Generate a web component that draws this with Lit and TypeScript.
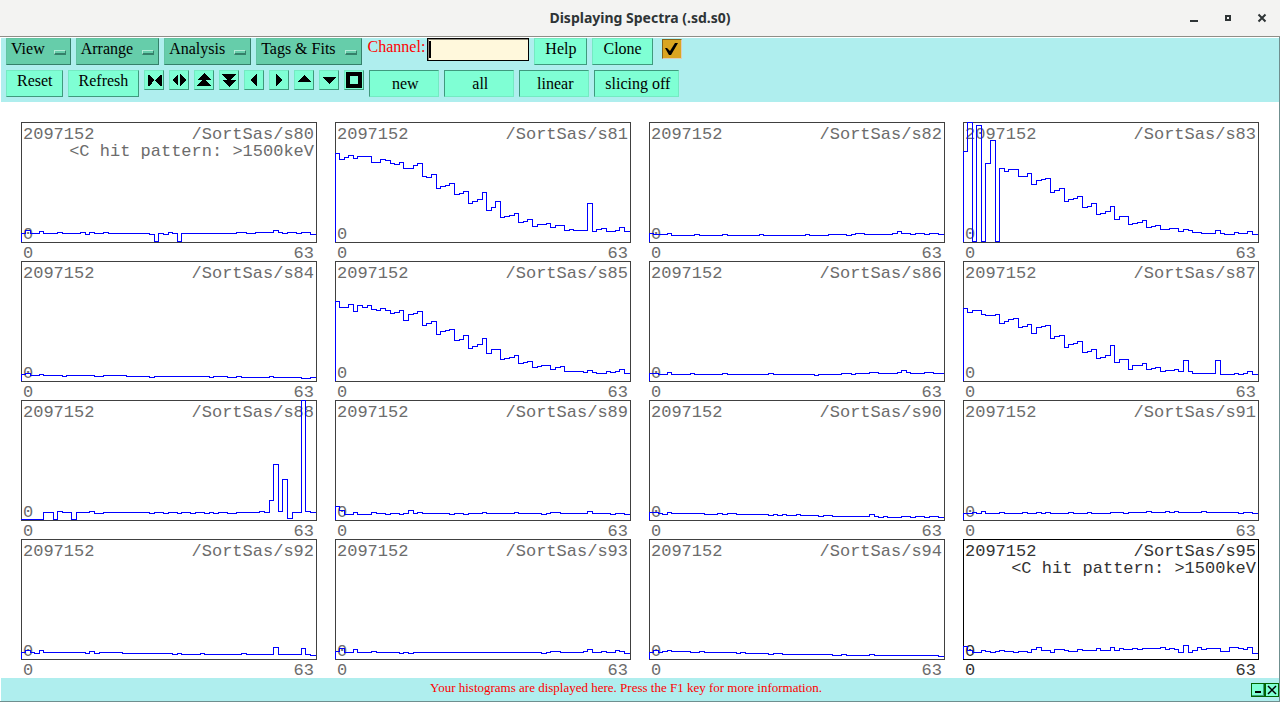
import { LitElement, html, svg, css } from "lit";
import { customElement, property } from "lit/decorators.js";

interface Spectrum {
  name: string;
  note?: string;
  bins: string;
}

// Bin heights, left to right; "h*n" repeats the height h over n bins.
const SPECTRA: Spectrum[] = [
  { name: "s80", note: "<C hit pattern: >1500keV", bins: "9 12 9*2 11 9*3 10 9*4 10 8 10 9*2 10 9*9 8 1 9 8 10 9 1 9*12 10*2 9*2 10*4 12 10 9 10*2 9 10*2 8" },
  { name: "s81", bins: "89 83 85 87 84 86*3 80*2 83 82 79 78 80 74*2 77 79 66 65 68 54 56 57 59 48 49 51 39 41 43 50 32 35 41 25 26 27 29 20 21 23 16 18*2 19 15 17*2 12 13 12*3 39 11 13 14 11*2 12 15 11" },
  { name: "s82", bins: "9 8*3 9 7*5 8 7*5 8 7*7 8 7*9 8 7*4 8*4 7 8 9*2 8*6 9 11 9*2 8 9*2 8 9*2 8" },
  { name: "s83", bins: "91 120 1 117 1 79 102 1 74 71 73*2 66*2 69 58 62 63 64 50 52 54 41 43 44 46 35 36 39 28 29 31 36 23 26*2 18 19 20 22 15 16 17 13*2 14*2 11 13 12 10*2 9*3 12 9 8*2 10 9*2 11 8" },
  { name: "s84", bins: "7 8 6*2 7 6*4 5 6*6 5*2 6*5 5*5 4 5*12 4 5*3 4*2 5 4*6 5 4*6 3*2 4" },
  { name: "s85", bins: "80 74*2 77 70 76 74 76 72 71 73 71 68 69 71 61 67 68 70 56 58 60 47 50 51 52 41 42 46 33 35 37 43 28 32*2 22 23 24 26 18 19 20 14 15 16*2 12 14 15 10*4 9 11 9 8*2 10 9 10 12 8" },
  { name: "s86", bins: "8*2 7*2 9 7*4 8 7*6 8 7*9 8 7*9 6 7*5 8*2 7 8*3 9*2 8*4 9 11 9 8*3 9*2 8*2" },
  { name: "s87", bins: "73 69 71*2 67 66*2 67 58 60 62 63 54 55 57 48 54 55 56 43 45 46 34 37 38 40 29 30 32 23 24 26 36 19 22*2 12 16*2 18 12 13 14 10 11*2 12 10 21 10 8*5 21 7*3 8 7 8 10 7" },
  { name: "s88", bins: "1*5 8*2 1 9 8*2 1 8*3 9 7*2 8*10 7 8*2 7 8*2 7 8*2 7 8*2 7 8 7 8*2 7*2 8*5 9 8 20 56 9 41 2 8*2 120 9 8" },
  { name: "s89", bins: "14 10 6*2 8 6*3 8 7*2 6 7*2 6 7 10 7 8 7*6 6 7*2 6 7*3 8 7*6 8 7*5 6 7 8*2 7*6 9 7*4 6 7*2 6" },
  { name: "s90", bins: "8*2 7 6 8 7*7 6*3 7 6 7*2 6*7 5 6 5 6 5*2 6 5*4 4 5*2 4*8 6 4 3 4 3*3 4*2 3 4*2 3 4*2 3" },
  { name: "s91", bins: "7*2 8 7 9 7*3 8 7*4 8 7*2 8 7 8 7*4 8 7*3 8 7*4 8*3 7 8*4 9 8*3 9 8 9 8*5 9 8*7 7 8*2 7" },
  { name: "s92", bins: "7 9 7 6 9 7*9 6 8 6 7*5 6*11 5 6 5*4 6 5*8 6 5*6 12 5*5 11 5 4" },
  { name: "s93", bins: "8 11 7*2 10 7*3 8 7*5 6 7 6 7*28 6 7 8*2 7*5 8 10 7*2 8 7*2 9 8 6" },
  { name: "s94", bins: "7 9 7 8 9 8*4 7*2 8 7*7 6 7 6*5 5 6*2 5*11 4*2 5 4*5 5 4*14 3" },
  { name: "s95", note: "<C hit pattern: >1500keV", bins: "13 9 7*2 9 8 7 8 9 8*2 7 8*2 7 10 12 9*2 7 10*2 9 8*2 10 9*3 11 9*2 12 9 11 10*2 11 10 11*4 12 10 11 10 7 14 7 9 12 10 11*3 8*2 12*2 11 10 12 6" },
];

function tracePath(bins: string): string {
  const heights = bins.split(" ").flatMap((run) => {
    const [height, count] = run.split("*").map(Number);
    return Array<number>(count || 1).fill(height);
  });
  let d = "M0.5 120";
  heights.slice(0, 64).forEach((height, i) => {
    const end = Math.floor(((i + 1) * 294) / 64) + 0.5;
    d += `V${120.5 - height}H${end}`;
  });
  return d;
}

@customElement("spectrum-plot")
export class SpectrumPlot extends LitElement {
  @property({ attribute: false }) spectrum!: Spectrum;
  @property({ type: Boolean, reflect: true }) active = false;

  static styles = css`
    :host {
      display: flex;
      flex-direction: column;
      min-width: 0;
      color: #6c6c6c;
      font: 17px/17px "Liberation Mono", monospace;
      --frame: #404040;
    }
    :host([active]) {
      color: #333;
      --frame: #000;
    }
    .plot {
      flex: 1;
      display: grid;
      min-height: 0;
    }
    .labels,
    .trace {
      grid-area: 1 / 1;
    }
    .labels {
      display: flex;
      flex-direction: column;
      padding: 4px 3px 0 2px;
    }
    .row {
      display: flex;
      justify-content: space-between;
    }
    .note {
      text-align: right;
      white-space: nowrap;
    }
    .zero {
      margin-top: auto;
    }
    .trace {
      display: block;
      width: 100%;
      height: 100%;
      min-height: 0;
      overflow: visible;
    }
    .frame,
    .line {
      fill: none;
      stroke: var(--frame);
      shape-rendering: crispEdges;
      vector-effect: non-scaling-stroke;
    }
    .line {
      stroke: #00f;
    }
    .axis {
      height: 18px;
      line-height: 22px;
      padding: 0 3px 0 2px;
    }
  `;

  render() {
    const { name, note, bins } = this.spectrum;
    return html`
      <div class="plot">
        <div class="labels">
          <div class="row"><span>2097152</span><span>/SortSas/${name}</span></div>
          ${note ? html`<div class="note">${note}</div>` : ""}
          <div class="zero">0</div>
        </div>
        <svg class="trace" viewBox="0 0 296 121" preserveAspectRatio="none" aria-hidden="true">
          <rect class="frame" x="0.5" y="0.5" width="295" height="120" />
          <path class="line" d=${tracePath(bins)} />
        </svg>
      </div>
      <div class="row axis"><span>0</span><span>63</span></div>
    `;
  }
}

const MENUS = ["View", "Arrange", "Analysis", "Tags & Fits"];
const TOGGLES = ["new", "all", "linear", "slicing off"];

const TOOLS = [
  { label: "Contract", shape: svg`<path d="M3 4h2v11H3zM5 4l4 5-4 6zM15 4h2v11h-2zM15 4l-5 5 5 6z" />` },
  { label: "Expand", shape: svg`<path d="M8 3v12l-6-6zM10 3v12l6-6z" />` },
  { label: "Scale up fast", shape: svg`<path d="M9 2l7 7h-5l5 6H2l5-6H2z" />` },
  { label: "Scale down fast", shape: svg`<path d="M9 16l7-7h-5l5-6H2l5 6H2z" />` },
  { label: "Left", shape: svg`<path d="M12 3v12l-7-6z" />` },
  { label: "Right", shape: svg`<path d="M6 3v12l7-6z" />` },
  { label: "Up", shape: svg`<path d="M9 4l7 7H2z" />` },
  { label: "Down", shape: svg`<path d="M9 13l7-7H2z" />` },
  { label: "Full view", shape: svg`<path fill-rule="evenodd" d="M1 1h16v16H1zM5 5v8h8V5z" />` },
];

@customElement("app-root")
export class AppRoot extends LitElement {
  static styles = css`
    :host {
      display: flex;
      flex-direction: column;
      box-sizing: border-box;
      min-height: 100vh;
      background: #fff;
      color: #000;
      font: 16px/20px "Liberation Serif", serif;
    }
    * {
      box-sizing: border-box;
    }
    button {
      margin: 0;
      font: inherit;
      color: inherit;
    }
    .titlebar {
      display: grid;
      grid-template-columns: 1fr auto 1fr;
      align-items: center;
      height: 37px;
      background: #f3f3f2;
      border-bottom: 1px solid #8e8e88;
    }
    .title {
      grid-column: 2;
      margin: 0;
      color: #2e3436;
      font: bold 14px/20px "Noto Sans", sans-serif;
    }
    .window-controls {
      display: flex;
      justify-content: flex-end;
      gap: 18px;
      padding-right: 10px;
    }
    .window-button {
      width: 16px;
      height: 16px;
      padding: 0;
      border: 0;
      background: none;
    }
    .window-button svg,
    .tool svg,
    .corner svg {
      display: block;
    }
    .body {
      flex: 1;
      display: flex;
      flex-direction: column;
      border: solid #6f8f8f;
      border-width: 0 1px 1px 0;
      padding: 1px 0 0 1px;
    }
    .toolbar {
      display: flex;
      flex-direction: column;
      gap: 5px;
      height: 64px;
      padding: 0 5px;
      background: #afeeee;
    }
    .bar {
      display: flex;
      align-items: flex-start;
      gap: 5px;
    }
    .button,
    .menu {
      height: 27px;
      padding: 0 10px 5px;
      border: 1px solid;
      border-color: #74eac2 #3f9a7d #3f9a7d #74eac2;
      background: #7fffd4;
      white-space: nowrap;
    }
    .menu {
      display: flex;
      align-items: center;
      gap: 9px;
      padding: 0 4px 5px;
      border-color: #62c4a3 #35806a #35806a #62c4a3;
      background: #66cdaa;
    }
    .indicator {
      width: 12px;
      height: 5px;
      margin-top: 6px;
      border: solid;
      border-width: 1px 1px 2px 1px;
      border-color: #b5ecd8 #35806a #35806a #b5ecd8;
    }
    .reset {
      padding: 0 9px 5px 10px;
    }
    .toggle {
      min-width: 70px;
      padding: 0 8px 0 10px;
      border-color: #3f9a7d #74eac2 #74eac2 #3f9a7d;
    }
    .tool {
      width: 20px;
      height: 20px;
      padding: 0;
      border: 1px solid;
      border-color: #74eac2 #3f9a7d #3f9a7d #74eac2;
      background: #7fffd4;
    }
    .channel {
      display: flex;
      gap: 2px;
      padding-left: 1px;
      color: #f00;
      line-height: 18px;
    }
    .entry {
      width: 102px;
      height: 23px;
      padding: 0 4px;
      border: 1px solid #000;
      border-radius: 0;
      outline: 0;
      box-shadow: inset 1px 1px #8f8b7c;
      background: linear-gradient(#000, #000) 1px 2px / 2px 17px no-repeat #fff8dc;
      font: inherit;
    }
    .check {
      position: relative;
      display: block;
      width: 20px;
      height: 20px;
      margin: 1px 0 0 4px;
    }
    .check input {
      appearance: none;
      display: block;
      width: 20px;
      height: 20px;
      margin: 0;
      border: 1px solid;
      border-color: #83631a #d9cdb8 #d9cdb8 #83631a;
      background: #daa520;
    }
    .check svg {
      position: absolute;
      inset: 0;
      pointer-events: none;
    }
    .plots {
      flex: 1;
      display: grid;
      grid-template-columns: repeat(4, minmax(0, 1fr));
      grid-auto-rows: minmax(139px, 1fr);
      column-gap: 18px;
      padding: 20px 20px 0;
    }
    .footer {
      display: flex;
      align-items: center;
      height: 23px;
      background: #afeeee;
      color: #f00;
      font-size: 13px;
      line-height: 20px;
    }
    .status {
      flex: 1;
      margin: 0;
      padding-bottom: 3px;
      text-align: center;
    }
    .corner {
      width: 14px;
      height: 14px;
      padding: 0;
      border: 1px solid #006400;
      background: #7fffd4;
    }
  `;

  render() {
    return html`
      <header class="titlebar">
        <h1 class="title">Displaying Spectra (.sd.s0)</h1>
        <div class="window-controls">
          <button class="window-button" aria-label="Minimize">
            <svg width="16" height="16" fill="#2e3436"><path d="M4 10h8v2H4z" /></svg>
          </button>
          <button class="window-button" aria-label="Maximize">
            <svg width="16" height="16" fill="none" stroke="#2e3436" stroke-width="2"><path d="M6 6h4v4H6z" /></svg>
          </button>
          <button class="window-button" aria-label="Close">
            <svg width="16" height="16" fill="none" stroke="#2e3436" stroke-width="2"><path d="M4.5 4.5l7 7M11.5 4.5l-7 7" /></svg>
          </button>
        </div>
      </header>
      <div class="body">
        <div class="toolbar">
          <div class="bar">
            ${MENUS.map(
              (name) => html`<button class="menu" aria-haspopup="menu">${name}<span class="indicator"></span></button>`
            )}
            <div class="channel">
              <label for="channel">Channel:</label>
              <input class="entry" id="channel" type="text" autocomplete="off" />
            </div>
            <button class="button">Help</button>
            <button class="button">Clone</button>
            <span class="check">
              <input type="checkbox" aria-label="Show values" checked />
              <svg width="20" height="20" aria-hidden="true"><path d="M3 9h2l3 3 5-8h3l-7 12H7z" /></svg>
            </span>
          </div>
          <div class="bar">
            <button class="button reset">Reset</button>
            <button class="button">Refresh</button>
            ${TOOLS.map(
              (tool) => html`<button class="tool" aria-label=${tool.label}>
                <svg width="18" height="18" shape-rendering="crispEdges" aria-hidden="true">${tool.shape}</svg>
              </button>`
            )}
            ${TOGGLES.map((name) => html`<button class="button toggle" aria-pressed="true">${name}</button>`)}
          </div>
        </div>
        <main class="plots">
          ${SPECTRA.map(
            (spectrum) => html`<spectrum-plot .spectrum=${spectrum} ?active=${spectrum.name === "s95"}></spectrum-plot>`
          )}
        </main>
        <footer class="footer">
          <p class="status">Your histograms are displayed here. Press the F1 key for more information.</p>
          <button class="corner" aria-label="Minimize panel">
            <svg width="12" height="12"><path d="M3 7h6v2H3z" /><path d="M11 0h1v12H0v-1h11z" fill="#3f9a7d" /></svg>
          </button>
          <button class="corner" aria-label="Close panel">
            <svg width="12" height="12" fill="none" stroke="#000" stroke-width="1.5"><path d="M2 2l8 8M10 2l-8 8" /></svg>
          </button>
        </footer>
      </div>
    `;
  }
}
